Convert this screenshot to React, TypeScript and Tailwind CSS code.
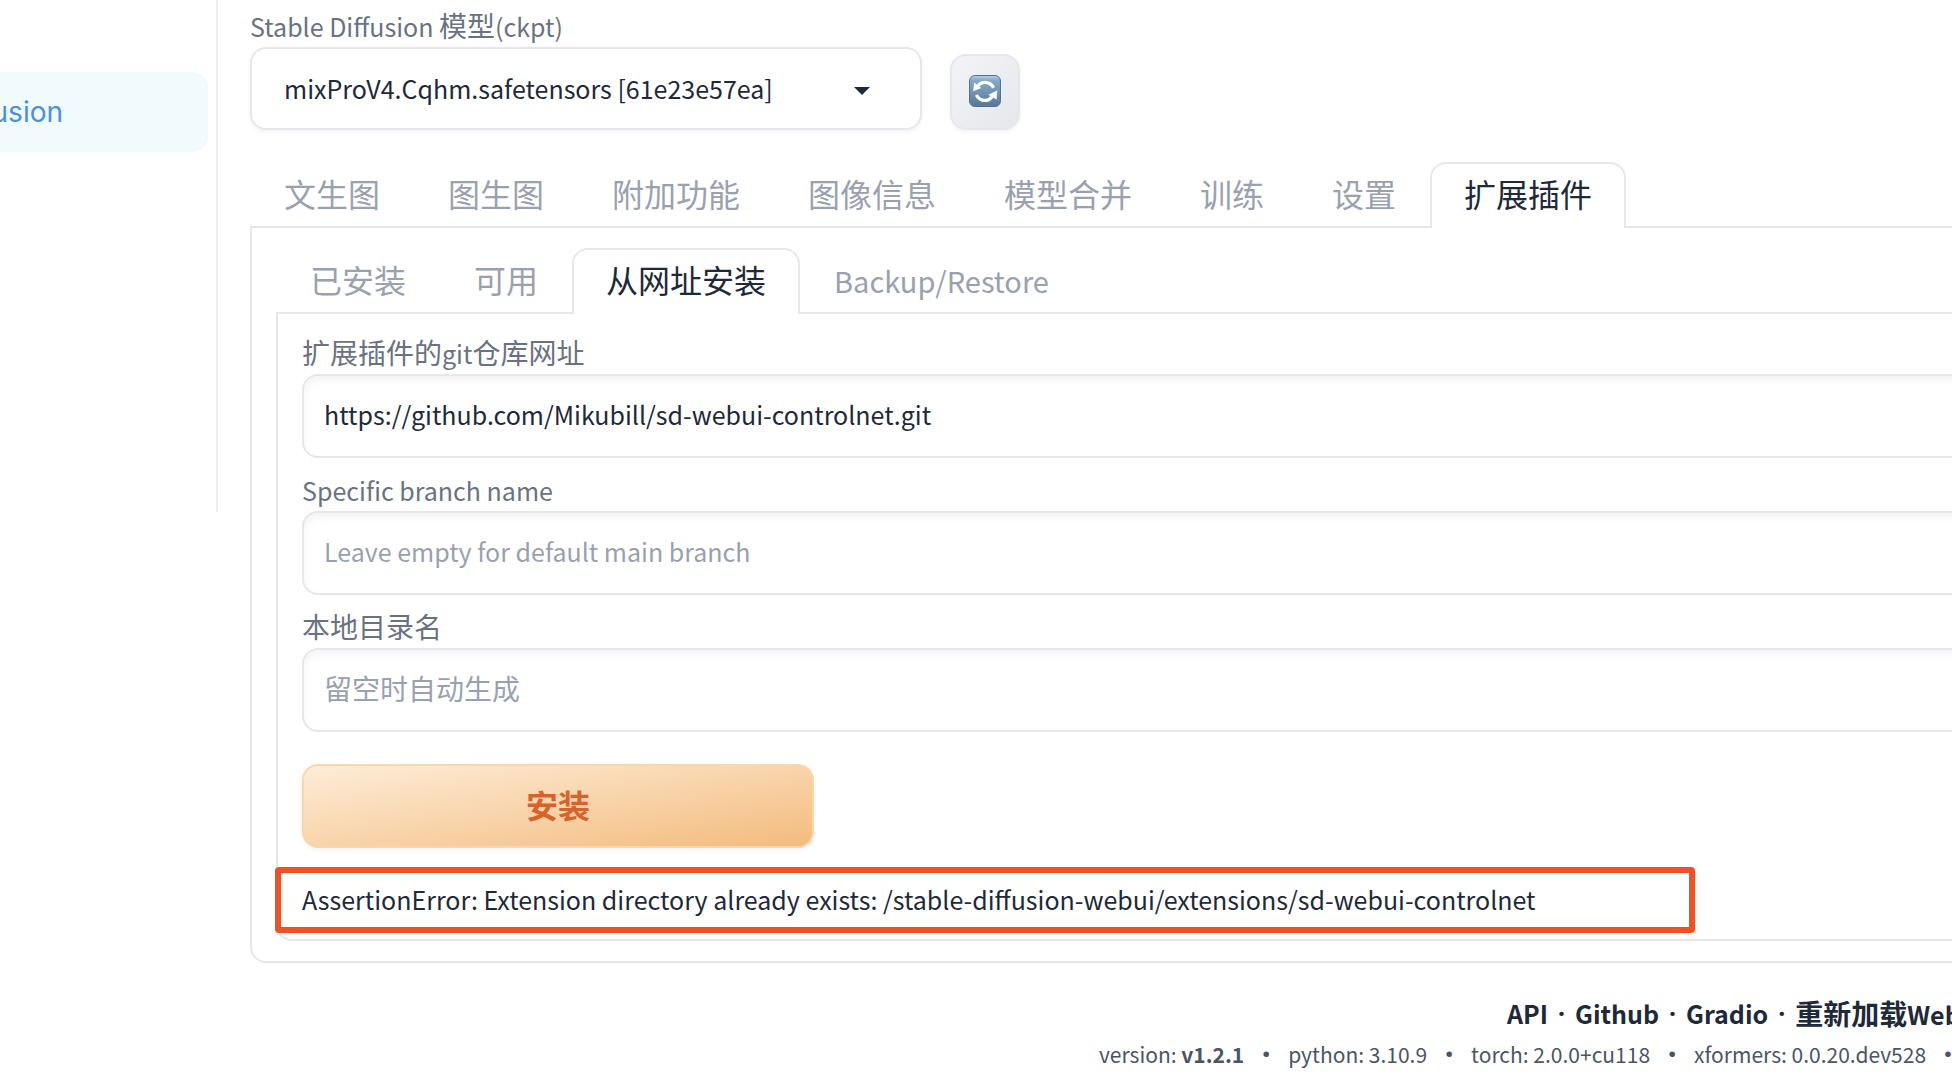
import { useState } from 'react';

const mainTabs = ['文生图', '图生图', '附加功能', '图像信息', '模型合并', '训练', '设置', '扩展插件'];
const extensionTabs = ['已安装', '可用', '从网址安装', 'Backup/Restore'];

const versions = [
  { name: 'version', value: 'v1.2.1', bold: true },
  { name: 'python', value: '3.10.9' },
  { name: 'torch', value: '2.0.0+cu118' },
  { name: 'xformers', value: '0.0.20.dev528' },
];

function TabBar({ tabs, active, onChange }) {
  return (
    <div role="tablist" className="flex">
      {tabs.map((tab) => (
        <button
          key={tab}
          role="tab"
          aria-selected={tab === active}
          onClick={() => onChange(tab)}
          className={
            tab === active
              ? 'shrink-0 h-[66px] px-8 pb-1.5 rounded-t-2xl border-2 border-b-0 border-gray-200 bg-white text-gray-800 text-[32px] leading-[48px]'
              : 'shrink-0 h-[66px] px-[34px] pb-0.5 border-b-2 border-gray-200 text-gray-400 text-[32px] leading-[48px]'
          }
        >
          {/* Latin glyphs run larger than the Chinese ones */}
          {/^[A-Z]/.test(tab) ? <span className="text-[29px]">{tab}</span> : tab}
        </button>
      ))}
      <div className="grow border-b-2 border-gray-200" />
    </div>
  );
}

function Field({ id, label, value = '', placeholder = '', latin = false }) {
  return (
    <div className="flex flex-col">
      <label htmlFor={id} className="h-[37px] text-[28px] leading-[30px] text-gray-500">
        {label}
      </label>
      <input
        id={id}
        type="text"
        defaultValue={value}
        placeholder={placeholder}
        className={
          'h-[84px] w-full pl-5 pb-1 rounded-2xl border-2 border-gray-200 bg-white text-gray-800 placeholder:text-gray-400 shadow-[inset_0_4px_8px_0_rgba(0,0,0,0.05)] outline-none ' +
          (latin ? 'text-[25px]' : 'text-[28px]')
        }
      />
    </div>
  );
}

function RefreshIcon() {
  return (
    <svg width="32" height="32" viewBox="0 0 32 32" aria-hidden="true">
      <defs>
        <linearGradient id="refresh-bg" x1="0" y1="0" x2="0" y2="1">
          <stop offset="0" stopColor="#b9d3e6" />
          <stop offset="0.15" stopColor="#86a9c6" />
          <stop offset="0.6" stopColor="#6d90b0" />
          <stop offset="1" stopColor="#587796" />
        </linearGradient>
      </defs>
      <rect x="0.5" y="0.5" width="31" height="31" rx="5.5" fill="url(#refresh-bg)" stroke="#52728f" />
      <path d="M8 13.2C9.4 9.4 12.4 7.4 16 7.4c3.6 0 6.8 1.9 8.6 5.4" fill="none" stroke="#fff" strokeWidth="3.2" />
      <path d="M5.2 7.6L4.2 16.3l8-3.3z" fill="#fff" />
      <path d="M24 19.6c-1.4 3.8-4.4 5.800-8 5.800-3.600 0-6.800-1.900-8.600-5.400" fill="none" stroke="#fff" strokeWidth="3.2" />
      <path d="M28.2 15.6l-0.6 8.8-8.2-4.6z" fill="#fff" />
    </svg>
  );
}

export default function App() {
  const [mainTab, setMainTab] = useState('扩展插件');
  const [extensionTab, setExtensionTab] = useState('从网址安装');

  return (
    <div className="flex min-h-screen overflow-hidden bg-white font-['Noto_Sans_CJK_SC',sans-serif] text-gray-800">
      {/* Sidebar */}
      <aside className="w-[218px] h-[512px] shrink-0 overflow-hidden border-r-2 border-[#efefef] pt-[72px] pr-2">
        <a
          href="#stable-diffusion"
          className="flex h-20 items-center justify-end rounded-r-2xl bg-[#f1fafd] pr-[145px] whitespace-nowrap font-['Inter',sans-serif] text-[28px] text-[#4a90e2]"
        >
          Stable Diffusion
        </a>
      </aside>

      <main className="min-w-0 grow pl-8 pt-2">
        {/* Checkpoint selector */}
        <div className="flex items-end gap-7">
          <div className="flex w-[672px] flex-col">
            <label htmlFor="ckpt" className="h-[39px] text-[25px] leading-[34px] text-gray-500">
              Stable Diffusion <span className="text-[28px]">模型</span>(ckpt)
            </label>
            <div className="relative">
              <select
                id="ckpt"
                className="block h-[83px] w-full appearance-none rounded-2xl border-2 border-gray-200 bg-white pl-8 pr-20 text-[25px] shadow-[0_2px_4px_0_rgba(0,0,0,0.05)]"
              >
                <option>mixProV4.Cqhm.safetensors [61e23e57ea]</option>
              </select>
              <svg className="pointer-events-none absolute right-[52px] top-10" width="16" height="8" viewBox="0 0 16 8">
                <path d="M0 0h16L8 8z" fill="#1f2937" />
              </svg>
            </div>
          </div>
          <button
            aria-label="refresh"
            className="flex h-[76px] w-[70px] items-center justify-center rounded-2xl border-2 border-gray-200 bg-linear-to-br from-gray-100 to-gray-200 pb-0.5 shadow-[0_2px_4px_0_rgba(0,0,0,0.05)]"
          >
            <RefreshIcon />
          </button>
        </div>

        <div className="mt-8">
          <TabBar tabs={mainTabs} active={mainTab} onChange={setMainTab} />
          <div className="rounded-bl-2xl border-b-2 border-l-2 border-gray-200 pb-5 pl-6 pt-5">
            <TabBar tabs={extensionTabs} active={extensionTab} onChange={setExtensionTab} />
            <div className="rounded-bl-2xl border-b-2 border-l-2 border-gray-200 pb-[7px] pl-6 pt-[23px]">
              {/* Fields run past the right edge of the window */}
              <div className="-mr-6 flex flex-col gap-4">
                <Field
                  id="git-url"
                  label={<>扩展插件的<span className="text-[25px]">git</span>仓库网址</>}
                  value="https://github.com/Mikubill/sd-webui-controlnet.git"
                  latin
                />
                <Field
                  id="branch"
                  label={<span className="text-[25px]">Specific branch name</span>}
                  placeholder="Leave empty for default main branch"
                  latin
                />
                <Field id="dirname" label="本地目录名" placeholder="留空时自动生成" />
              </div>
              <button className="mt-8 h-[84px] w-[512px] rounded-2xl border-2 border-[#f9d7ab] bg-linear-to-br from-[#fdedd8] to-[#f3bb7c] pb-1 text-[32px] font-bold text-[#d9622b] shadow-[0_2px_4px_0_rgba(0,0,0,0.05)]">
                安装
              </button>

              {/* Error message with its highlight frame */}
              <div className="relative mt-5 flex h-[64px] items-center">
                <p className="text-[25px]">
                  AssertionError: Extension directory already exists: /stable-diffusion-webui/extensions/sd-webui-controlnet
                </p>
                <div className="pointer-events-none absolute -inset-y-px -left-[27px] w-[1420px] rounded-sm border-[6px] border-[#f05123]" />
              </div>
            </div>
          </div>
        </div>

        <footer className="mt-[30px] whitespace-nowrap">
          <nav className="flex pl-[1257px] text-[25px] leading-[40px] font-bold">
            <a href="#api">API</a>
            <span className="w-[27px] shrink-0 text-center font-['Noto_Sans',sans-serif]">·</span>
            <a href="#github">Github</a>
            <span className="w-[27px] shrink-0 text-center font-['Noto_Sans',sans-serif]">·</span>
            <a href="#gradio">Gradio</a>
            <span className="w-[27px] shrink-0 text-center font-['Noto_Sans',sans-serif]">·</span>
            <a href="#reload"><span className="text-[28px]">重新加载</span>WebUI</a>
          </nav>
          <div className="flex pl-[849px] text-[21px] leading-[40px] text-gray-600">
            {versions.map((item) => (
              <span key={item.name} className="flex">
                <span>
                  {item.name}: {item.bold ? <b>{item.value}</b> : item.value}
                </span>
                <span className="w-11 shrink-0 text-center font-['Liberation_Sans',sans-serif]">•</span>
              </span>
            ))}
          </div>
        </footer>
      </main>
    </div>
  );
}
